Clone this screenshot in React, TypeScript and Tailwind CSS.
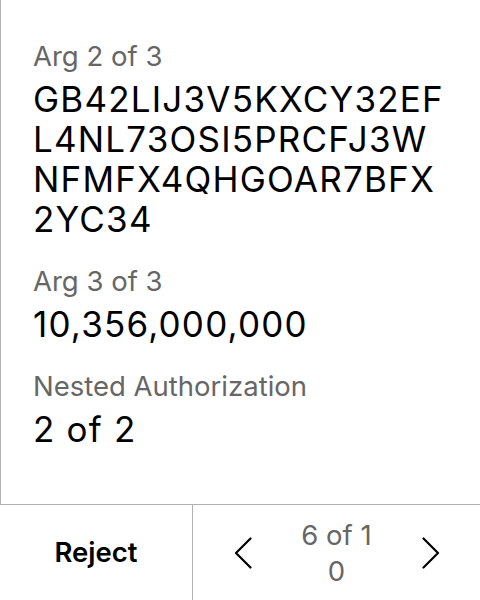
import React from 'react';

const fields = [
  { label: "Arg 2 of 3", value: "GB42LIJ3V5KXCY32EFL4NL73OSI5PRCFJ3WNFMFX4QHGOAR7BFX2YC34" },
  { label: "Arg 3 of 3", value: "10,356,000,000" },
  { label: "Nested Authorization", value: "2 of 2" },
];

const Chevron = ({ dir }: { dir: "left" | "right" }) => (
  <svg width="18" height="32" viewBox="0 0 18 32" fill="none" stroke="#000" strokeWidth="2.2" strokeLinecap="round" strokeLinejoin="round">
    {dir === "left" ? <path d="M16.5 1.5 L2 16 L16.5 30.5" /> : <path d="M1.5 1.5 L16 16 L1.5 30.5" />}
  </svg>
);

export default function App() {
  return (
    <div className="w-[480px] h-[600px] flex flex-col bg-white font-['Inter',sans-serif] overflow-hidden">
      {/* Content */}
      <div className="flex-1 border-l border-[#b0b0b0] pl-8 pr-8 pt-10 flex flex-col gap-[26px]">
        {fields.map((f) => (
          <div key={f.label} className="flex flex-col gap-[7px]">
            <div className="text-[27.5px] leading-[32px] text-[#666666]">{f.label}</div>
            <div className="text-[35px] leading-[40px] tracking-[1.2px] text-black break-all">{f.value}</div>
          </div>
        ))}
      </div>

      {/* Bottom bar */}
      <div className="h-24 shrink-0 border-t border-[#b0b0b0] flex">
        <button className="w-[193px] border-r border-[#b0b0b0] flex items-center justify-center text-[27.5px] font-semibold text-black">
          Reject
        </button>
        <div className="flex-1 flex items-center justify-center gap-[45px]">
          <Chevron dir="left" />
          <div className="w-[80px] text-center text-[27.5px] leading-[36px] text-[#666666] break-all">6 of 10</div>
          <Chevron dir="right" />
        </div>
      </div>
    </div>
  );
}
